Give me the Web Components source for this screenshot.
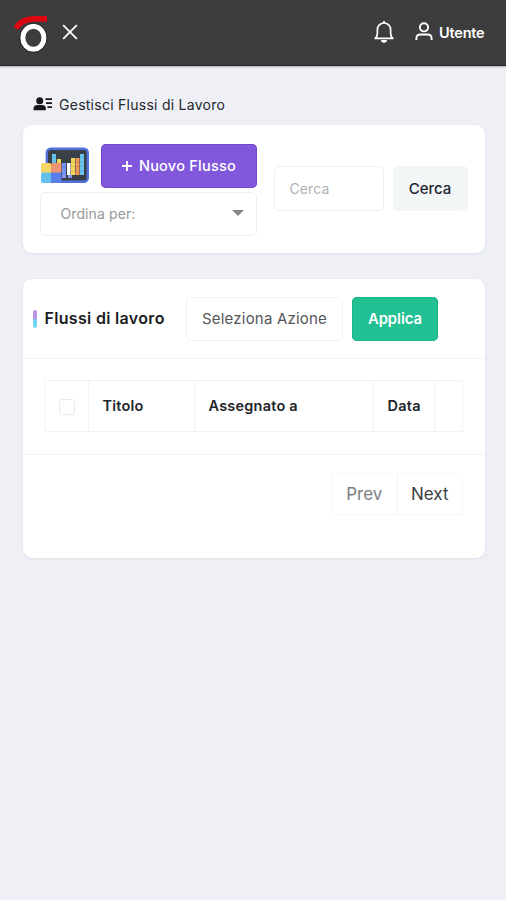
<!DOCTYPE html>
<html lang="it">
<head>
<meta charset="utf-8">
<title>Gestisci Flussi di Lavoro</title>
<style>
html,body{margin:0;height:100%;background:#eef0f6}
body{font-family:Inter,"Liberation Sans",sans-serif;color:#181c32;overflow:hidden}
</style>
</head>
<body>
<flow-app></flow-app>
<script>
const define = (name, html) => {
  const template = document.createElement('template');
  template.innerHTML = '<style>*{box-sizing:border-box}:host{box-sizing:border-box}</style>' + html;
  customElements.define(name, class extends HTMLElement {
    constructor() {
      super();
      this.attachShadow({mode: 'open'}).append(template.content.cloneNode(true));
    }
  });
};

define('app-header', `
<style>
:host{display:flex;align-items:center;height:66px;padding:0 21.500px 0 14px;background:#3d3d3d;border-bottom:1px solid #242424;box-shadow:0 1px 2px #0004;color:#fff}
.logo{width:36px;height:40px;margin-top:2px}
.close{width:16px;height:16px;margin:-1px 0 0 12px}
.bell{width:22px;height:24px;margin:-1px 0 0 auto}
.user{width:20px;height:21px;margin:-2px 5px 0 19px}
span{font-size:14.500px;font-weight:600;letter-spacing:-.2px}
svg{display:block;flex:none;fill:none;stroke:#fff}
</style>
<svg class="logo" viewBox="14 14 36 40"><ellipse cx="33.4" cy="37.8" rx="10.6" ry="11.5" stroke-width="5"/><ellipse cx="33.4" cy="37.8" rx="13.8" ry="14.6" stroke="#2b2b2b" stroke-width="1"/><path d="M16 28.500Q21 19.500 33 18.900H47" stroke="#dc0711" stroke-width="5.600"/></svg>
<svg class="close" viewBox="0 0 16 16" stroke-width="1.8"><path d="M1.2 1.2 14.8 14.8M14.8 1.2 1.2 14.8"/></svg>
<svg class="bell" viewBox="0 0 22 24" stroke-width="1.7"><path d="M2.2 18.4Q4.4 16.6 4.4 13V9.6a6.6 6.6 0 0 1 13.2 0V13q0 3.6 2.2 5.4Z" stroke-linejoin="round"/><path d="M11 3V1"/><path d="M8.2 20a2.8 2.8 0 0 0 5.6 0Z" fill="#fff" stroke="none"/><path d="M8.6 20.4q2.4 2 4.8 0"/></svg>
<svg class="user" viewBox="0 0 20 22" stroke-width="2"><circle cx="10" cy="6.6" r="4.3"/><path d="M2 20v-1.4q0-4.4 4.4-4.4h7.2q4.4 0 4.4 4.4V20"/></svg>
<span>Utente</span>`);

define('page-title', `
<style>
:host{display:flex;align-items:center;height:20px;gap:6px;font-size:14px;color:#24262b;letter-spacing:.26px}
svg{width:20px;height:14px;margin-top:-1px}
</style>
<svg viewBox="0 0 20 14" fill="#15171b"><circle cx="6.7" cy="3.8" r="3.5"/><path d="M.5 13.2V12q0-4 4-4h4.400q4 0 4 4v1.200Z"/><path d="M12.500 1.200H19V3h-6.500ZM13 5.300h6V7h-6ZM14.500 9.300H19V11h-4.500Z"/></svg>
<slot></slot>`);

define('ui-card', `
<style>:host{display:block;background:#fff;border-radius:9px;box-shadow:0 1px 3px #dcdfe6}</style><slot></slot>`);

define('ui-button', `
<style>
:host{display:flex;align-items:center;justify-content:center;height:44px;border-radius:5px;font-size:14.500px;font-weight:500;white-space:nowrap}
:host([kind=primary]){background:#8158db;color:#fff;box-shadow:inset 0 0 0 1px #7448d0}
:host([kind=success]){background:#23c094;color:#fff;font-weight:600;font-size:14.800px;box-shadow:inset 0 0 0 1px #1cb489}
:host([kind=light]){background:#f3f6f7;color:#1c2430;font-size:15px}
:host([kind=outline]){background:#fff;color:#55565a;font-weight:400;border:1px solid #f0f1f4;font-size:15px;letter-spacing:.2px}
</style><slot></slot>`);

define('ui-field', `
<style>
:host{display:flex;align-items:center;justify-content:space-between;height:44px;border:1px solid #eeeff3;border-radius:5px;font-size:14px;letter-spacing:.1px;color:#96979b;background:#fff}
svg{display:none;width:12px;height:6px;margin-top:-2px}
:host([select]) svg{display:block}
</style><slot></slot><svg viewBox="0 0 12 6"><path d="M0 0h12L6 6Z" fill="#858585"/></svg>`);

define('board-icon', `
<style>:host{display:block;width:50px;height:38px;margin-top:-1px}svg{display:block}</style>
<svg width="50" height="38" viewBox="0 0 50 38">
<rect x="6.800" y="1.800" width="41" height="33" rx="4" fill="#394047" stroke="#5370dc" stroke-width="2.400"/>
<path d="M12 7h4v21h-4ZM40 7h4v21h-4Z" fill="#67c5ed"/>
<path d="M17 12h4v16h-4Z" fill="#f3d75c"/><path d="M22 16h4v12h-4Z" fill="#7392f5"/>
<path d="M27 16h3.500v12H27Z" fill="#fff"/><path d="M31 11h4v17h-4Z" fill="#f5d85b"/><path d="M35.500 11h4v17h-4Z" fill="#f39a61"/>
<path d="M22 28h4v3h-4ZM28 28h4v3h-4Z" fill="#8395ee"/>
<path d="M12 10.500h4M12 15h4M12 19.500h4M40 10.500h4M40 15h4M40 19.500h4M40 24h4M31 15h8.500M31 19.500h8.500M31 24h8.500M22 20h4" stroke="#394047" stroke-opacity=".2" stroke-width=".8"/>
<rect x="1" y="16" width="10.500" height="10.500" rx="2" fill="#f5d565"/><rect x="11" y="16" width="10.500" height="10.500" rx="2" fill="#ee9674"/>
<rect x="1" y="25.500" width="10.500" height="10.500" rx="2" fill="#62c0eb"/><rect x="11" y="25.500" width="10.500" height="10.500" rx="2" fill="#5b7de9"/>
</svg>`);

define('flow-toolbar', `
<style>
:host{display:flex;align-items:center;height:128px;padding:0 17.500px 0 17px;justify-content:space-between}
.left{width:217px;display:grid;gap:4px;margin-top:2px}
.row{display:flex;justify-content:space-between;align-items:center}
.new{width:156px;gap:6px;letter-spacing:.25px;padding-bottom:2px}
.new svg{width:12px;height:12px;margin-top:2px}
.sort{padding:0 12px 1px 20px;height:44px}
.right{display:flex;gap:9px;width:194px;margin-top:-1px}
.search{width:110px;padding-left:15px;height:45px;color:#b0b1b4}
.go{width:75px;height:45px}
</style>
<div class="left"><div class="row"><board-icon></board-icon><ui-button class="new" kind="primary"><svg viewBox="0 0 12 12"><path d="M6 1v10M1 6h10" stroke="#fff" stroke-width="1.900"/></svg><span>Nuovo Flusso</span></ui-button></div>
<ui-field class="sort" select>Ordina per:</ui-field></div>
<div class="right"><ui-field class="search">Cerca</ui-field><ui-button class="go" kind="light">Cerca</ui-button></div>`);

define('flow-table', `
<style>
:host{display:grid;grid-template-columns:44px 106px 179px 61px 1fr;height:52px;border:1px solid #f3f3f6;font-size:14.500px;letter-spacing:.22px;font-weight:600;color:#22242a}
div{display:flex;align-items:center;padding:0 0 1px 13.500px;border-right:1px solid #f3f3f6;white-space:nowrap}
div:last-child{border:0}
i{display:block;width:16px;height:16px;border:1px solid #eaebee;border-radius:3px;margin-top:3px}
</style>
<div><i></i></div><div>Titolo</div><div>Assegnato a</div><div>Data</div><div></div>`);

define('flow-pager', `
<style>
:host{display:flex;width:132px;height:42px;border:1px solid #f7f7f9;font-size:17px}
span{display:flex;align-items:center;justify-content:center;flex:1}
.prev{color:#7c7d80;border-right:1px solid #f4f4f6}
.next{color:#3c3e42}
</style><span class="prev">Prev</span><span class="next">Next</span>`);

define('flow-list', `
<style>
:host{display:block;height:279px}
header{display:flex;align-items:center;height:80px;padding-left:11px;border-bottom:1px solid #f4f5f7}
.bar{width:4px;height:18px;border-radius:2px;background:linear-gradient(#bd91e5 45%,#73d4f4 55%)}
h2{margin:-1px 0 0 7.500px;width:141.500px;font-size:16px;letter-spacing:.32px;font-weight:600;color:#1b1c20;white-space:nowrap}
.act{width:157px}.apply{width:86px;margin-left:9px}
main{height:96px;padding:21px 22px 0 22px;border-bottom:1px solid #f2f3f5}
footer{display:flex;justify-content:flex-end;padding:18px 22px 0}
</style>
<header><div class="bar"></div><h2>Flussi di lavoro</h2><ui-button class="act" kind="outline">Seleziona Azione</ui-button><ui-button class="apply" kind="success">Applica</ui-button></header>
<main><flow-table></flow-table></main>
<footer><flow-pager></flow-pager></footer>`);

define('flow-app', `
<style>
:host{display:block;height:900px;background:#eef0f6}
section{padding:28px 21px 0 22.500px}
page-title{margin:0 0 11px 10.500px}
flow-list{margin-left:-.500px}
.list{margin-top:26px}
</style>
<app-header></app-header>
<section><page-title>Gestisci Flussi di Lavoro</page-title>
<ui-card><flow-toolbar></flow-toolbar></ui-card>
<ui-card class="list"><flow-list></flow-list></ui-card></section>`);
</script>
</body>
</html>
